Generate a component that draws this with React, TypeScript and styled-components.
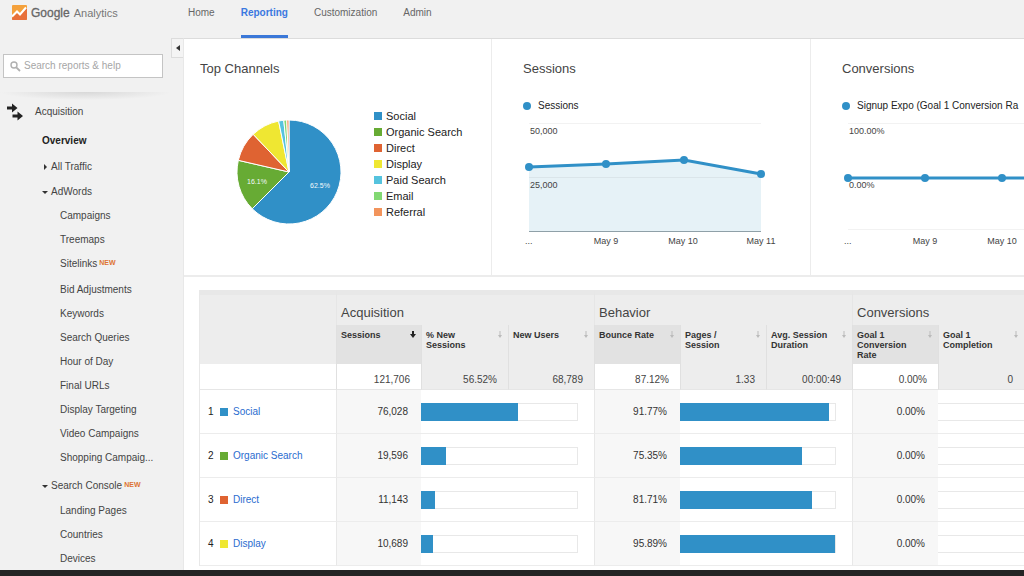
import React from 'react';
import styled, { createGlobalStyle } from 'styled-components';

const blue = '#3090c7';

const GlobalStyle = createGlobalStyle`
  *, *::before, *::after { box-sizing: border-box; }
  body {
    margin: 0;
    background: #f1f1f1;
    color: #444;
    font: 10px/16px "Liberation Sans", Arial, Helvetica, sans-serif;
  }
  button, input { font: inherit; color: inherit; }
  a { text-decoration: none; }
  ul { list-style: none; margin: 0; padding: 0; }
`;

/* ---------- shell ---------- */

const Page = styled.div`
  display: flex;
  flex-direction: column;
  height: 100vh;
  overflow: hidden;
  border-bottom: 6px solid #242424;
`;

const Header = styled.header`
  display: flex;
  flex: none;
  height: 38px;
`;

const Brand = styled.a`
  display: flex;
  align-items: flex-start;
  gap: 4px;
  flex: none;
  width: 188px;
  padding: 5px 0 0 12px;
`;

const Wordmark = styled.span`
  color: #777;
  font-size: 11px;
  strong {
    margin-right: 4px;
    font-size: 12px;
    font-weight: 400;
    color: #666;
    -webkit-text-stroke: 0.3px #666;
  }
`;

const Nav = styled.nav`
  display: flex;
  gap: 26px;
`;

const NavLink = styled.a<{ $active?: boolean }>`
  padding-top: 5px;
  color: ${(p) => (p.$active ? '#3b78e0' : '#666')};
  font-weight: ${(p) => (p.$active ? 700 : 400)};
  border-bottom: 3px solid ${(p) => (p.$active ? '#3b78d8' : 'transparent')};
`;

const Body = styled.div`
  display: flex;
  flex: 1;
  min-height: 0;
`;

/* ---------- sidebar ---------- */

const Sidebar = styled.aside`
  display: flex;
  align-items: flex-start;
  flex: none;
  width: 183px;
`;

const SidebarContent = styled.div`
  flex: 1;
  min-width: 0;
  padding-top: 16px;
`;

const CollapseButton = styled.button`
  display: flex;
  align-items: center;
  justify-content: center;
  width: 12px;
  height: 20px;
  padding: 0;
  background: #f4f4f4;
  border: 1px solid #dcdcdc;
  border-right: 0;
`;

const SearchBox = styled.label`
  display: flex;
  align-items: center;
  gap: 3px;
  height: 24px;
  margin: 0 8px 0 3px;
  padding: 0 6px;
  background: #fff;
  border: 1px solid #c4c4c4;
`;

const SearchInput = styled.input`
  flex: 1;
  min-width: 0;
  padding: 0;
  border: 0;
  outline: 0;
  background: none;
  &::placeholder { color: #a6a6a6; opacity: 1; }
`;

const Shade = styled.div`
  height: 8px;
  margin-top: 14px;
  background: radial-gradient(ellipse 50% 100% at 50% 0, #d8d8d8, #f1f1f100);
`;

const SectionTitle = styled.h2`
  display: flex;
  align-items: center;
  gap: 11px;
  height: 24px;
  margin: 0;
  padding: 0 0 0 6px;
  font-size: 10px;
  font-weight: 400;
`;

const Tree = styled.ul`
  padding: 4px 0 0 42px;
`;

const TreeRow = styled.li`
  display: flex;
  flex-direction: column;
  & + &:last-child { margin-top: 3px; }
`;

const TreeLink = styled.a<{ $current?: boolean }>`
  height: 26px;
  line-height: 26px;
  color: ${(p) => (p.$current ? '#222' : '#444')};
  font-weight: ${(p) => (p.$current ? 700 : 400)};
`;

const TreeToggle = styled.button<{ $tall?: boolean }>`
  display: flex;
  align-items: center;
  gap: 3px;
  height: ${(p) => (p.$tall ? 26 : 24)}px;
  padding: 0;
  border: 0;
  background: none;
  svg { flex: none; }
`;

const SubItem = styled.a<{ $isNew?: boolean }>`
  display: block;
  height: ${(p) => (p.$isNew ? 26 : 24)}px;
  padding-left: 18px;
  line-height: 24px;
  color: #444;
  white-space: nowrap;
`;

const NewTag = styled.span`
  padding-left: 2px;
  color: #dd7433;
  font-size: 7px;
  font-weight: 700;
  line-height: 8px;
  vertical-align: 2px;
`;

/* ---------- main ---------- */

const Main = styled.main`
  flex: 1;
  min-width: 0;
  overflow: hidden;
  background: #fff;
  border-top: 1px solid #dcdcdc;
  border-left: 1px solid #e8e8e8;
`;

const Cards = styled.div`
  display: grid;
  grid-template-columns: minmax(307px, 1fr) minmax(319px, 1fr) minmax(319px, 1fr);
  border-bottom: 2px solid #ececec;
`;

const Card = styled.section`
  padding: 23px 16px 27px 31px;
  border-left: 1px solid #ececec;
  &:first-child { padding-left: 16px; border-left: 0; }
`;

const CardTitle = styled.h3`
  margin: 0;
  font-size: 13px;
  font-weight: 400;
  line-height: 14px;
`;

const PieRow = styled.div`
  display: flex;
  align-items: flex-start;
  gap: 33px;
  padding: 32px 0 0 37px;
`;

const Swatch = styled.span<{ $color: string }>`
  flex: none;
  width: 8px;
  height: 8px;
  background: ${(p) => p.$color};
`;

const LegendItem = styled.li`
  display: flex;
  align-items: center;
  gap: 4px;
  color: #222;
  font-size: 11px;
`;

const SeriesLegend = styled.div`
  display: flex;
  align-items: center;
  gap: 7px;
  margin-top: 22px;
  color: #222;
  white-space: nowrap;
`;

const Dot = styled.span`
  flex: none;
  width: 8px;
  height: 8px;
  border-radius: 50%;
  background: ${blue};
`;

const ChartSvg = styled.svg`
  display: block;
  text { font-size: 9px; fill: #444; }
`;

/* ---------- table ---------- */

const TableArea = styled.div`
  padding: 13px 0 0 15px;
`;

const Table = styled.table`
  width: 100%;
  table-layout: fixed;
  border-collapse: separate;
  border-spacing: 0;
  border-left: 1px solid #e8e8e8;
  th, td { padding: 0; }
`;

const CornerCell = styled.th`
  background: #ededed;
  border-top: 5px solid #e8e8e8;
`;

const GroupCell = styled.th`
  height: 35px;
  background: #ededed;
  border-top: 5px solid #e8e8e8;
  border-left: 1px solid #e6e6e6;
  font-size: 13px;
  font-weight: 400;
  text-align: left;
  && { padding: 5px 0 0 4px; }
`;

const ColumnCell = styled.th<{ $lead?: boolean }>`
  height: 39px;
  vertical-align: top;
  background: ${(p) => (p.$lead ? '#e2e2e2' : '#ededed')};
  border-left: 1px solid #e0e0e0;
`;

const SortButton = styled.button`
  display: flex;
  align-items: flex-start;
  justify-content: space-between;
  width: 100%;
  padding: 5px 5px 0 4px;
  border: 0;
  background: none;
  color: #333;
  font-size: 9px;
  font-weight: 700;
  line-height: 10px;
  text-align: left;
  span { display: block; white-space: nowrap; }
  svg { flex: none; margin-top: 1px; }
`;

const TotalCell = styled.td<{ $plain?: boolean }>`
  height: 26px;
  background: ${(p) => (p.$plain ? '#fff' : '#ededed')};
  border-left: 1px solid #e0e0e0;
  border-bottom: 1px solid #e6e6e6;
  text-align: right;
  && { padding: 6px 11px 0 0; }
  &:first-child { border-left: 0; }
`;

const NameCell = styled.th`
  height: 44px;
  border-bottom: 1px solid #ececec;
  font-weight: 400;
  text-align: left;
`;

const NameInner = styled.div`
  display: flex;
  align-items: center;
  padding-left: 8px;
  color: #222;
  a { margin-left: 5px; color: #2a6ccf; }
`;

const Rank = styled.span`
  width: 12px;
`;

const ValueCell = styled.td`
  background: #f7f7f7;
  border-left: 1px solid #e8e8e8;
  border-bottom: 1px solid #ececec;
  color: #333;
  text-align: right;
  && { padding-right: 13px; }
`;

const BarCell = styled.td<{ $open?: boolean }>`
  border-bottom: 1px solid #ececec;
  && { padding-right: ${(p) => (p.$open ? 0 : 16)}px; }
`;

const Track = styled.div<{ $open?: boolean }>`
  height: 18px;
  border: 1px solid #e8e8e8;
  border-width: 1px ${(p) => (p.$open ? 0 : 1)}px 1px 0;
`;

const Fill = styled.div`
  height: 18px;
  margin-top: -1px;
  background: ${blue};
`;

/* ---------- data ---------- */

const channels = [
  { name: 'Social', color: '#3090c7', end: 62.5 },
  { name: 'Organic Search', color: '#67ab34', end: 78.6 },
  { name: 'Direct', color: '#df6332', end: 87.9 },
  { name: 'Display', color: '#efe732', end: 96.8 },
  { name: 'Paid Search', color: '#55c3de', end: 98.4 },
  { name: 'Email', color: '#82d873', end: 99.3 },
  { name: 'Referral', color: '#f2945c', end: 100 },
];

const adwords = ['Campaigns', 'Treemaps', 'Sitelinks', 'Bid Adjustments', 'Keywords', 'Search Queries', 'Hour of Day', 'Final URLs', 'Display Targeting', 'Video Campaigns', 'Shopping Campaig...'];
const searchConsole = ['Landing Pages', 'Countries', 'Devices'];

const columns = [
  { lines: ['Sessions'], total: '121,706', lead: true, sorted: true },
  { lines: ['% New', 'Sessions'], total: '56.52%' },
  { lines: ['New Users'], total: '68,789' },
  { lines: ['Bounce Rate'], total: '87.12%', lead: true },
  { lines: ['Pages /', 'Session'], total: '1.33' },
  { lines: ['Avg. Session', 'Duration'], total: '00:00:49' },
  { lines: ['Goal 1', 'Conversion', 'Rate'], total: '0.00%', lead: true },
  { lines: ['Goal 1', 'Completion'], total: '0' },
];

const rows = [
  { sessions: '76,028', share: 62, bounce: '91.77%', bounceBar: 96 },
  { sessions: '19,596', share: 16, bounce: '75.35%', bounceBar: 79 },
  { sessions: '11,143', share: 9, bounce: '81.71%', bounceBar: 85 },
  { sessions: '10,689', share: 8, bounce: '95.89%', bounceBar: 100 },
];

/* ---------- pieces ---------- */

const slicePath = (from: number, to: number) => {
  const at = (pct: number) => {
    const a = (pct / 100) * Math.PI * 2;
    return `${52 + 52 * Math.sin(a)} ${64 - 52 * Math.cos(a)}`;
  };
  return `M52 64 L${at(from)} A52 52 0 ${to - from > 50 ? 1 : 0} 1 ${at(to)} Z`;
};

const PieLabel = styled.text`
  && { font-size: 7px; fill: #f2f8fb; }
`;

const Pie = () => (
  <ChartSvg width="104" height="128" role="img" aria-label="Sessions by channel">
    {channels.map((c, i) => (
      <path key={c.name} d={slicePath(i ? channels[i - 1].end : 0, c.end)} fill={c.color} stroke="#fff" strokeWidth="1" />
    ))}
    <PieLabel x="83" y="80" textAnchor="middle">62.5%</PieLabel>
    <PieLabel x="20" y="76" textAnchor="middle">16.1%</PieLabel>
  </ChartSvg>
);

type LineChartProps = { points: number[][]; grid: number[]; labels: [string, string]; area?: boolean };

const LineChart = ({ points, grid, labels, area }: LineChartProps) => {
  const line = points.map((p) => p.join(',')).join(' ');
  return (
    <ChartSvg width="270" height="134">
      {area && <polygon points={`6,117 ${line} 238,117`} fill="#e6f2f7" />}
      {grid.map((y) => (
        <path key={y} d={`M6 ${y}.5H238`} stroke="#000" strokeOpacity="0.05" />
      ))}
      {area && <path d="M6 117.5H238" stroke="#8fa0a8" strokeWidth="1" />}
      <text x="7" y="20">{labels[0]}</text>
      <text x="7" y="74">{labels[1]}</text>
      <polyline points={line} fill="none" stroke={blue} strokeWidth="3" />
      {points.map(([x, y]) => (
        <circle key={x} cx={x} cy={y} r="4" fill={blue} />
      ))}
      <text x="2" y="130">...</text>
      <text x="83" y="130" textAnchor="middle">May 9</text>
      <text x="160" y="130" textAnchor="middle">May 10</text>
      <text x="238" y="130" textAnchor="middle">May 11</text>
    </ChartSvg>
  );
};

const SortArrow = ({ active }: { active?: boolean }) => (
  <svg width="6" height="7" viewBox="0 0 6 7" aria-hidden="true">
    <path d={active ? 'M2 0H4V3H6L3 7L0 3H2Z' : 'M2.5 0H3.5V4H5L3 7L1 4H2.5Z'} fill={active ? '#222' : '#bbb'} />
  </svg>
);

const Caret = ({ open }: { open?: boolean }) => (
  <svg width="6" height="6" viewBox="0 0 6 6" aria-hidden="true">
    <path d={open ? 'M0 2H6L3 5Z' : 'M2 0L5 3L2 6Z'} fill="#333" />
  </svg>
);

export default function App() {
  return (
    <>
      <GlobalStyle />
      <Page>
        <Header>
          <Brand href="#">
            <svg width="15" height="15" viewBox="0 0 15 15" aria-hidden="true">
              <path d="M1 0H14Q15 0 15 1V14Q15 15 14 15H1Q0 15 0 14V1Q0 0 1 0Z" fill="#f4a13c" />
              <path d="M0 13L5 8L8 10L15 3V14Q15 15 14 15H1Q0 15 0 14Z" fill="#e8703a" />
              <path d="M0 11.500L5 6.500L8 9.500L14 2.500" fill="none" stroke="#fff" strokeWidth="2" />
            </svg>
            <Wordmark><strong>Google</strong>Analytics</Wordmark>
          </Brand>
          <Nav>
            <NavLink href="#">Home</NavLink>
            <NavLink href="#" $active>Reporting</NavLink>
            <NavLink href="#">Customization</NavLink>
            <NavLink href="#">Admin</NavLink>
          </Nav>
        </Header>
        <Body>
          <Sidebar>
            <SidebarContent>
              <SearchBox>
                <svg width="11" height="11" viewBox="0 0 11 11" fill="none" stroke="#b0b0b0" aria-hidden="true">
                  <circle cx="4" cy="4" r="3" strokeWidth="1.4" />
                  <path d="M6.3 6.3L10 10" strokeWidth="1.8" />
                </svg>
                <SearchInput type="text" aria-label="Search reports & help" placeholder="Search reports & help" />
              </SearchBox>
              <Shade />
              <SectionTitle>
                <svg width="18" height="18" viewBox="0 0 18 18" fill="#222" aria-hidden="true">
                  <path d="M1 3.5H6V0.5L11.5 5L6 9.500V6.500H1Z" />
                  <path d="M6.500 11.500H11.500V8.500L17 13L11.500 17.500V14.500H6.500Z" />
                </svg>
                Acquisition
              </SectionTitle>
              <Tree>
                <TreeRow><TreeLink href="#" $current>Overview</TreeLink></TreeRow>
                <TreeRow><TreeToggle type="button" $tall><Caret />All Traffic</TreeToggle></TreeRow>
                <TreeRow>
                  <TreeToggle type="button"><Caret open />AdWords</TreeToggle>
                  <ul>
                    {adwords.map((name) => (
                      <li key={name}>
                        <SubItem href="#" $isNew={name === 'Sitelinks'}>
                          {name}{name === 'Sitelinks' && <NewTag>NEW</NewTag>}
                        </SubItem>
                      </li>
                    ))}
                  </ul>
                </TreeRow>
                <TreeRow>
                  <TreeToggle type="button" $tall><Caret open /><span>Search Console<NewTag>NEW</NewTag></span></TreeToggle>
                  <ul>
                    {searchConsole.map((name) => (
                      <li key={name}><SubItem href="#">{name}</SubItem></li>
                    ))}
                  </ul>
                </TreeRow>
              </Tree>
            </SidebarContent>
            <CollapseButton type="button" aria-label="Collapse sidebar">
              <svg width="4" height="6" viewBox="0 0 4 6" aria-hidden="true"><path d="M4 0V6L0 3Z" fill="#333" /></svg>
            </CollapseButton>
          </Sidebar>
          <Main>
            <Cards>
              <Card>
                <CardTitle>Top Channels</CardTitle>
                <PieRow>
                  <Pie />
                  <ul>
                    {channels.map((c) => (
                      <LegendItem key={c.name}><Swatch $color={c.color} />{c.name}</LegendItem>
                    ))}
                  </ul>
                </PieRow>
              </Card>
              <Card>
                <CardTitle>Sessions</CardTitle>
                <SeriesLegend><Dot />Sessions</SeriesLegend>
                <LineChart area points={[[6, 53], [83, 50], [161, 46], [238, 60]]} grid={[9, 63]} labels={['50,000', '25,000']} />
              </Card>
              <Card>
                <CardTitle>Conversions</CardTitle>
                <SeriesLegend><Dot />Signup Expo (Goal 1 Conversion Ra</SeriesLegend>
                <LineChart points={[[6, 64], [83, 64], [160, 64], [238, 64]]} grid={[9, 115]} labels={['100.00%', '0.00%']} />
              </Card>
            </Cards>
            <TableArea>
              <Table>
                <colgroup>
                  <col style={{ width: 136 }} />
                  <col style={{ width: 85 }} />
                  <col style={{ width: 87 }} />
                  {columns.slice(3).map((c) => <col key={c.lines.join()} style={{ width: 86 }} />)}
                  <col style={{ width: 86 }} />
                </colgroup>
                <thead>
                  <tr>
                    <CornerCell rowSpan={2} aria-label="Channel" />
                    <GroupCell colSpan={3} scope="colgroup">Acquisition</GroupCell>
                    <GroupCell colSpan={3} scope="colgroup">Behavior</GroupCell>
                    <GroupCell colSpan={2} scope="colgroup">Conversions</GroupCell>
                  </tr>
                  <tr>
                    {columns.map((c) => (
                      <ColumnCell key={c.lines.join()} $lead={c.lead} scope="col">
                        <SortButton type="button">
                          <div>{c.lines.map((l) => <span key={l}>{l}</span>)}</div>
                          <SortArrow active={c.sorted} />
                        </SortButton>
                      </ColumnCell>
                    ))}
                  </tr>
                </thead>
                <tbody>
                  <tr>
                    <TotalCell $plain />
                    {columns.map((c) => <TotalCell key={c.lines.join()} $plain={c.lead}>{c.total}</TotalCell>)}
                  </tr>
                  {rows.map((r, i) => (
                    <tr key={r.sessions}>
                      <NameCell scope="row">
                        <NameInner>
                          <Rank>{i + 1}</Rank>
                          <Swatch $color={channels[i].color} />
                          <a href="#">{channels[i].name}</a>
                        </NameInner>
                      </NameCell>
                      <ValueCell>{r.sessions}</ValueCell>
                      <BarCell colSpan={2}><Track><Fill style={{ width: `${r.share}%` }} /></Track></BarCell>
                      <ValueCell>{r.bounce}</ValueCell>
                      <BarCell colSpan={2}><Track><Fill style={{ width: `${r.bounceBar}%` }} /></Track></BarCell>
                      <ValueCell>0.00%</ValueCell>
                      <BarCell $open><Track $open /></BarCell>
                    </tr>
                  ))}
                </tbody>
              </Table>
            </TableArea>
          </Main>
        </Body>
      </Page>
    </>
  );
}
